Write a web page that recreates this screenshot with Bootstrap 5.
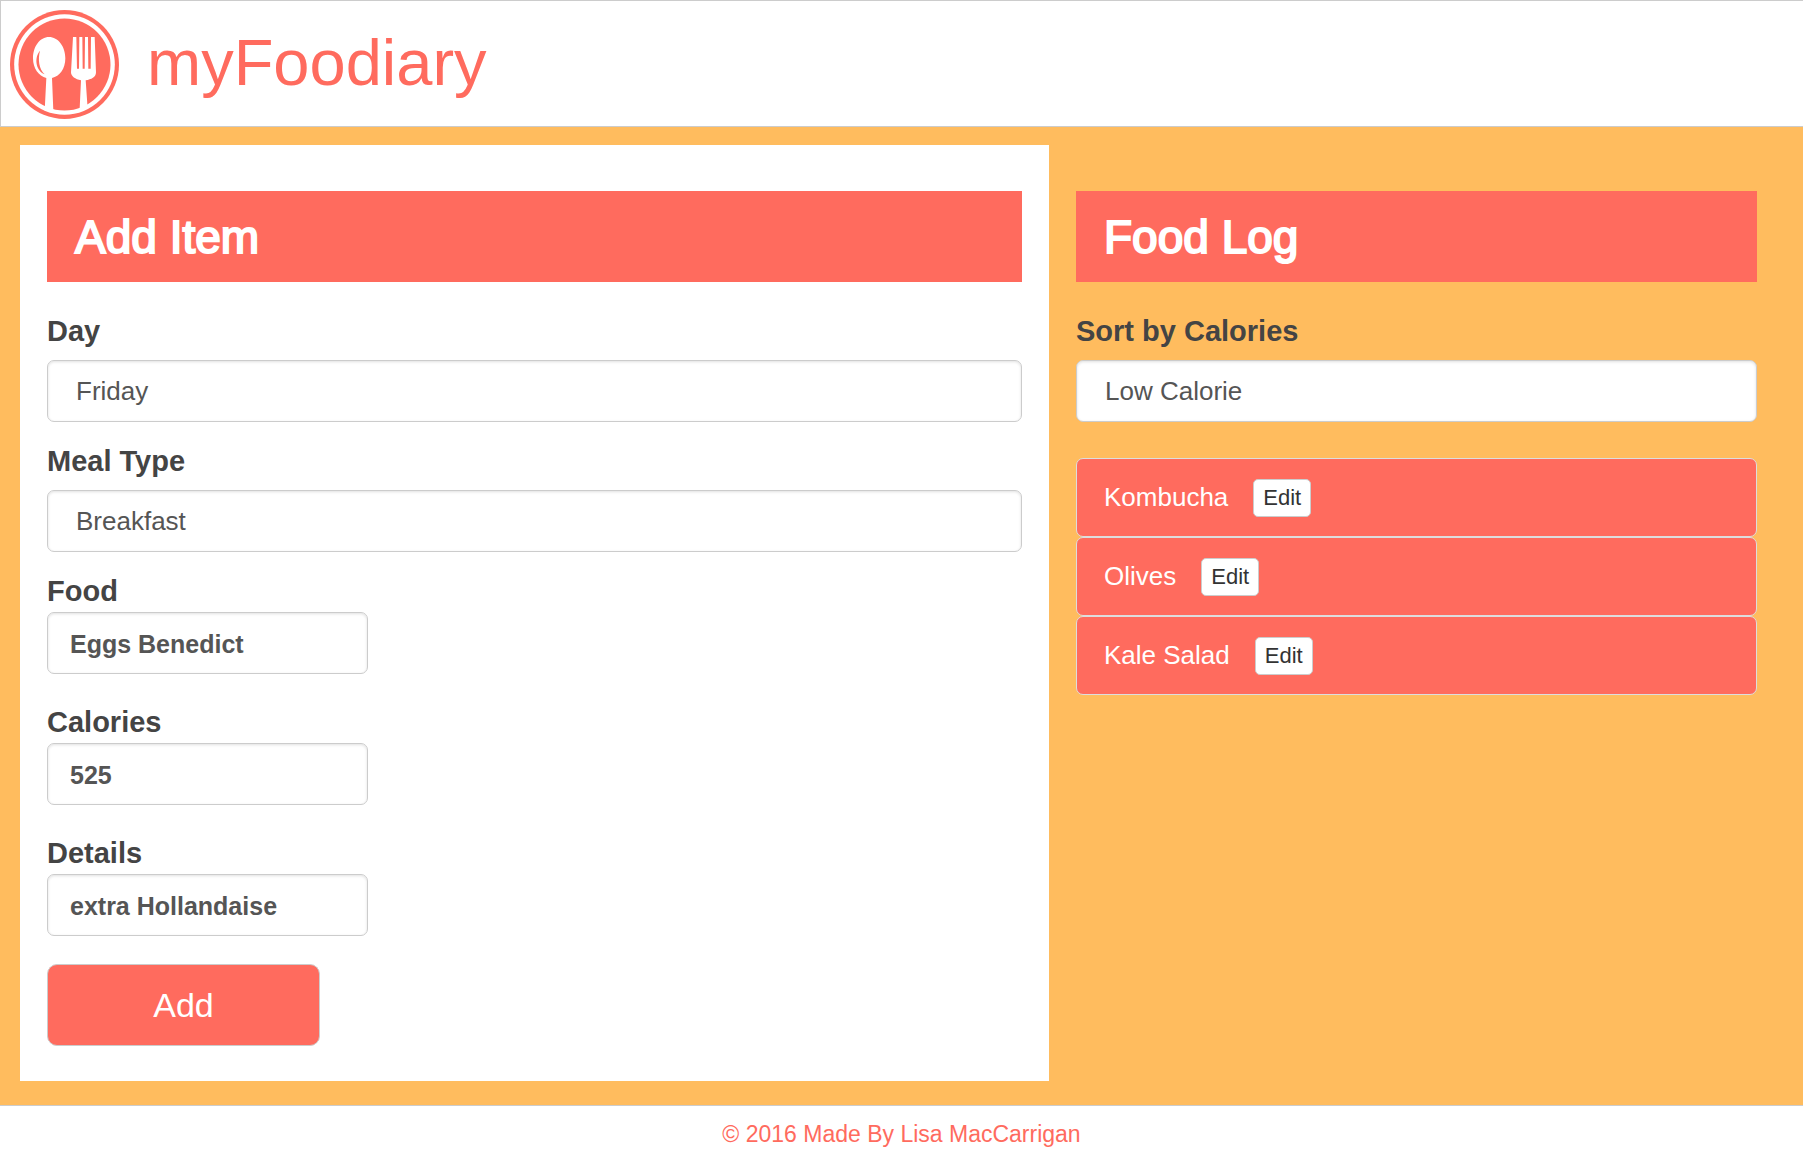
<!DOCTYPE html>
<html lang="en">
<head>
<meta charset="utf-8">
<meta name="viewport" content="width=device-width, initial-scale=1">
<title>myFoodiary</title>
<link href="https://cdn.jsdelivr.net/npm/bootstrap@5.3.0/dist/css/bootstrap.min.css" rel="stylesheet">
<style>
  :root { --coral: #ff6b5e; --amber: #ffbc5e; --line: #ccc; }
  body { font-family: "Liberation Sans", Arial, sans-serif; background: #fff; }
  .site-header { border: 1px solid var(--line); border-right: 0; padding: 9px 8px 7px; gap: 27px; }
  .brand-logo { width: 111px; height: 109px; flex: none; }
  .brand-name { font-size: 65px; line-height: 92px; color: var(--coral); font-weight: 400; padding-bottom: 4px; }
  .diary { background: var(--amber); padding: 18px 19px 24px 20px; }
  .pane { padding: 46px 27px 35px; }
  .pane-title { background: var(--coral); color: #fff; font-size: 46px; line-height: 51px; font-weight: 400; -webkit-text-stroke: 2px #fff; padding: 21px 28px 19px; margin-bottom: 29px; }
  .field-label { display: block; font-size: 29px; line-height: 41px; font-weight: 700; color: #444; margin: 0; }
  .field-box { height: 62px; border: 1px solid var(--line); border-radius: 7px; box-shadow: inset 0 1px 3px rgba(0,0,0,.12); line-height: 36px; color: #555; }
  select.field-box { -webkit-appearance: none; appearance: none; background: #fff; font-size: 26px; padding: 0 28px; margin: 8px 0 19px; }
  input.field-box { width: 321px; max-width: 100%; font-size: 25px; font-weight: 700; padding: 2px 22px 0; margin-bottom: 28px; }
  .add-btn { width: 273px; height: 82px; border: 1px solid var(--line); border-radius: 10px; background: var(--coral); color: #fff; font-size: 34px; padding: 0; }
  .add-btn:hover { background: #f05a4d; color: #fff; border-color: var(--line); }
  .log-list { margin-top: 36px; }
  .log-list .list-group-item { height: 79px; border: 1px solid #ddd; border-radius: 7px; background: var(--coral); color: #fff; font-size: 26px; line-height: 36px; padding: 0 27px; gap: 25px; }
  .log-list span { padding-bottom: 2px; }
  .edit-btn { height: 38px; border: 1px solid var(--line); border-radius: 5px; background: #fff; color: #333; font-size: 22px; line-height: 34px; padding: 1px 9px; }
  .site-footer { border-top: 1px solid var(--line); color: var(--coral); font-size: 23px; line-height: 34px; padding: 11px 0 9px; }
</style>
<script src="https://cdn.jsdelivr.net/npm/bootstrap@5.3.0/dist/js/bootstrap.bundle.min.js"></script>
</head>
<body>
<header class="site-header d-flex align-items-center">
  <svg class="brand-logo" viewBox="27 30 333 327" aria-hidden="true">
    <circle cx="193.500" cy="193.500" r="163.500" fill="#ff6b5e"/>
    <circle cx="193.500" cy="193.500" r="151" fill="#fff"/>
    <circle cx="193.500" cy="193.500" r="138" fill="#ff6b5e"/>
    <g fill="#fff">
      <path d="M147 111C174 111 196 139 196 175C196 207 179 229 156 234L160 332H134L139 234C116 229 99 205 99 175C99 139 120 111 147 111Z"/>
      <path d="M219 111H229L231 206H237L238 111H247L248 206H254L255 111H264L265 206H272L273 111H284L288 217C288 231 274 239 257 241L263 326H239L243 241C226 238 213 229 213 217Z"/>
    </g>
    <path d="M120 152C103 171 105 210 134 223C117 208 113 178 120 152Z" fill="#ff6b5e"/>
  </svg>
  <h1 class="brand-name mb-0">myFoodiary</h1>
</header>

<main class="diary">
  <div class="row g-0">
    <section class="col-7 pane bg-white">
      <h2 class="pane-title">Add Item</h2>
      <form>
        <label class="field-label" for="day">Day</label>
        <select id="day" class="field-box d-block w-100">
          <option>Monday</option><option>Tuesday</option><option>Wednesday</option><option>Thursday</option><option selected>Friday</option><option>Saturday</option><option>Sunday</option>
        </select>
        <label class="field-label" for="meal">Meal Type</label>
        <select id="meal" class="field-box d-block w-100">
          <option selected>Breakfast</option><option>Lunch</option><option>Dinner</option><option>Snack</option>
        </select>
        <label class="field-label" for="food">Food</label>
        <input id="food" class="field-box d-block" type="text" value="Eggs Benedict">
        <label class="field-label" for="calories">Calories</label>
        <input id="calories" class="field-box d-block" type="text" inputmode="numeric" value="525">
        <label class="field-label" for="details">Details</label>
        <input id="details" class="field-box d-block" type="text" value="extra Hollandaise">
        <button type="button" class="btn add-btn d-block">Add</button>
      </form>
    </section>
    <section class="col-5 pane">
      <h2 class="pane-title">Food Log</h2>
      <label class="field-label" for="sort">Sort by Calories</label>
      <select id="sort" class="field-box d-block w-100 mb-0">
        <option selected>Low Calorie</option><option>High Calorie</option>
      </select>
      <ul class="list-group log-list">
        <li class="list-group-item d-flex align-items-center"><span>Kombucha</span><button type="button" class="btn edit-btn">Edit</button></li>
        <li class="list-group-item d-flex align-items-center"><span>Olives</span><button type="button" class="btn edit-btn">Edit</button></li>
        <li class="list-group-item d-flex align-items-center"><span>Kale Salad</span><button type="button" class="btn edit-btn">Edit</button></li>
      </ul>
    </section>
  </div>
</main>

<footer class="site-footer text-center">© 2016 Made By Lisa MacCarrigan</footer>
</body>
</html>
